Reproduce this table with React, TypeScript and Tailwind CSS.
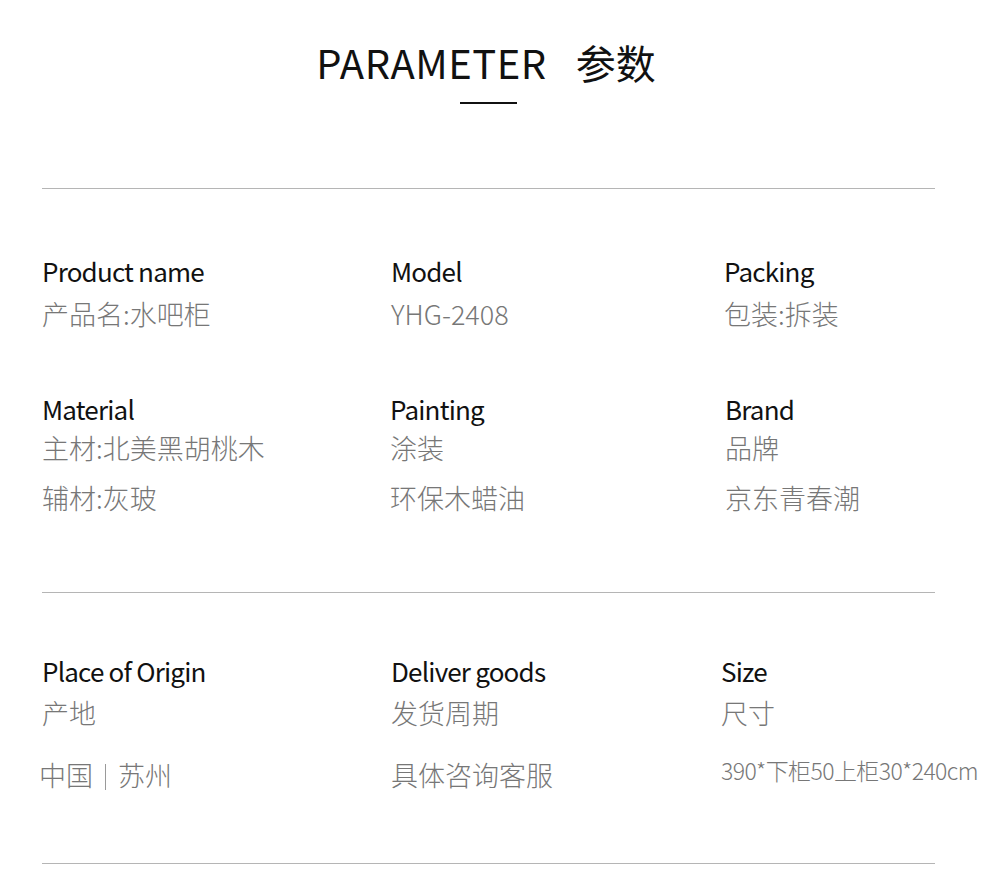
import React from "react";

type Spec = {
  label: string;
  lines: React.ReactNode[];
  shift?: string;
  small?: boolean;
};

const Bar: React.FC = () => (
  <span className="inline-block align-[-4px] w-px h-[26px] bg-[#9a9a9a] mx-[12px]" />
);

const firstBlock: Spec[][] = [
  [
    { label: "Product name", lines: ["产品名:水吧柜"] },
    { label: "Model", lines: ["YHG-2408"], shift: "pl-[1px]" },
    { label: "Packing", lines: ["包装:拆装"], shift: "pl-[1px]" },
  ],
  [
    { label: "Material", lines: ["主材:北美黑胡桃木", "辅材:灰玻"] },
    { label: "Painting", lines: ["涂装", "环保木蜡油"] },
    { label: "Brand", lines: ["品牌", "京东青春潮"], shift: "pl-[2px]" },
  ],
];

const secondBlock: Spec[] = [
  {
    label: "Place of Origin",
    lines: [
      "产地",
      <span key="o" className="-ml-[3px]">
        中国
        <Bar />
        苏州
      </span>,
    ],
  },
  { label: "Deliver goods", lines: ["发货周期", "具体咨询客服"], shift: "pl-[1px]" },
  { label: "Size", lines: ["尺寸", "390*下柜50上柜30*240cm"], shift: "-ml-[2px]", small: true },
];

const Label: React.FC<{ text: string }> = ({ text }) => (
  <div className="text-[26px] leading-[36px] text-[#111] tracking-[-0.8px]">{text}</div>
);

const Value: React.FC<{ children: React.ReactNode; small?: boolean }> = ({ children, small }) => (
  <div
    className={
      small
        ? "text-[23px] leading-[36px] font-light text-[#777] tracking-[-0.6px] whitespace-nowrap"
        : "text-[27px] leading-[36px] font-light text-[#777] whitespace-nowrap"
    }
  >
    {children}
  </div>
);

const App: React.FC = () => {
  return (
    <div
      className="w-[990px] h-[896px] bg-white overflow-hidden"
      style={{ fontFamily: '"Noto Sans CJK SC", "Noto Sans", sans-serif' }}
    >
      {/* title */}
      <div className="pt-[38px] pr-[18px] flex flex-col items-center">
        <h1 className="flex items-center gap-[29px] text-[40px] leading-[48px] text-[#111] font-normal">
          <span className="tracking-[0.5px]">PARAMETER</span>
          <span>参数</span>
        </h1>
        <div className="mt-[16px] ml-[4px] w-[57px] h-[2px] bg-[#111]" />
      </div>

      <div className="ml-[42px] w-[893px] mt-[84px] border-t border-[#b5b5b5]">
        {/* block one */}
        <div className="pt-[64px] pb-[76px] grid grid-cols-[348px_333px_1fr]">
          {firstBlock[0].map((c) => (
            <div key={c.label} className={c.shift}>
              <Label text={c.label} />
              <div className="mt-[7px]">
                <Value>{c.lines[0]}</Value>
              </div>
            </div>
          ))}
          {firstBlock[1].map((c) => (
            <div key={c.label} className={`${c.shift ?? ""} mt-[59px]`}>
              <Label text={c.label} />
              <div className="mt-[3px]">
                <Value>{c.lines[0]}</Value>
              </div>
              <div className="mt-[14px]">
                <Value>{c.lines[1]}</Value>
              </div>
            </div>
          ))}
        </div>

        {/* block two */}
        <div className="border-t border-[#b5b5b5] pt-[60px] pb-[70px] grid grid-cols-[348px_333px_1fr]">
          {secondBlock.map((c) => (
            <div key={c.label} className={c.shift}>
              <Label text={c.label} />
              <div className="mt-[6px]">
                <Value>{c.lines[0]}</Value>
              </div>
              <div className={c.small ? "mt-[21px]" : "mt-[26px]"}>
                <Value small={c.small}>{c.lines[1]}</Value>
              </div>
            </div>
          ))}
        </div>

        <div className="border-t border-[#b5b5b5]" />
      </div>
    </div>
  );
};

export default App;
